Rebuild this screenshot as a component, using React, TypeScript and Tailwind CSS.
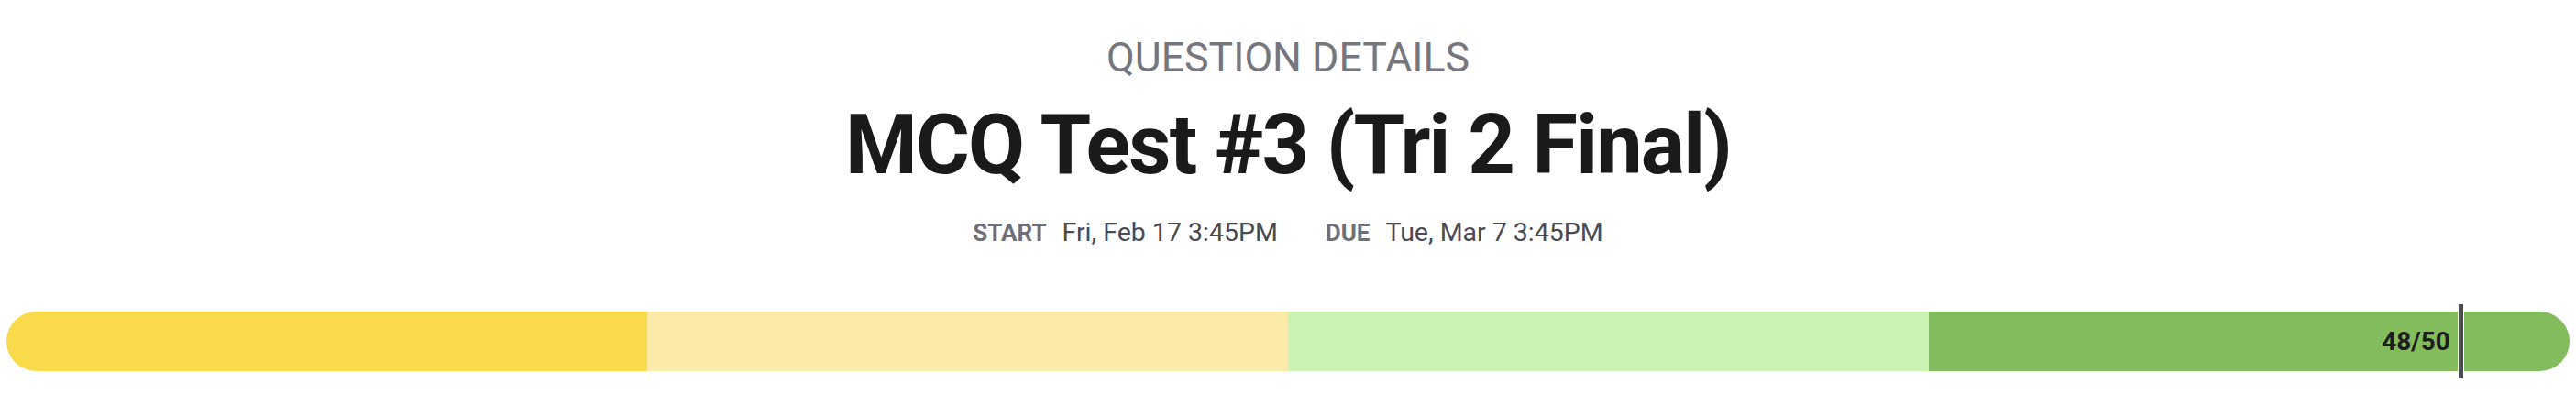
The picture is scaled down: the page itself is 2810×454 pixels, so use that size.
import React from "react";

export default function App() {
  const segments = ["bg-[#f8da4b]", "bg-[#fceba8]", "bg-[#cbf3b3]", "bg-[#82bc5c]"];
  return (
    <div
      className="w-full h-[454px] bg-white flex flex-col items-center pt-[41px]"
      style={{ fontFamily: "Roboto, 'Noto Sans', sans-serif" }}
    >
      <div className="text-[44.7px] leading-none text-[#76767e] font-normal">QUESTION DETAILS</div>
      <h1 className="mt-[28px] text-[90px] leading-none font-bold text-[#1a1a1a] tracking-[-0.02em]">
        MCQ Test #3 (Tri 2 Final)
      </h1>
      <div className="mt-[36px] flex items-baseline text-[28.5px] leading-none text-[#4a4a52]">
        <span className="text-[26px] font-bold text-[#6f6f77] mr-[17px]">START</span>
        <span>Fri, Feb 17 3:45PM</span>
        <span className="text-[26px] font-bold text-[#6f6f77] ml-[52px] mr-[17px]">DUE</span>
        <span>Tue, Mar 7 3:45PM</span>
      </div>
      <div className="mt-[72px] w-full px-[7px]">
        <div className="relative h-[65px]">
          <div className="flex h-full w-full rounded-full overflow-hidden">
            {segments.map((c) => (
              <div key={c} className={`flex-1 ${c}`} />
            ))}
          </div>
          <div className="absolute inset-y-0 right-[4.3%] flex items-center pr-[10px]">
            <span className="text-[28px] font-bold text-[#1e1e1e] leading-none">48/50</span>
          </div>
          <div className="absolute top-[-8px] bottom-[-8px] left-[calc(95.8%_-_5px)] w-[7px] bg-[#4a4a52] border-x border-white" />
        </div>
      </div>
    </div>
  );
}
